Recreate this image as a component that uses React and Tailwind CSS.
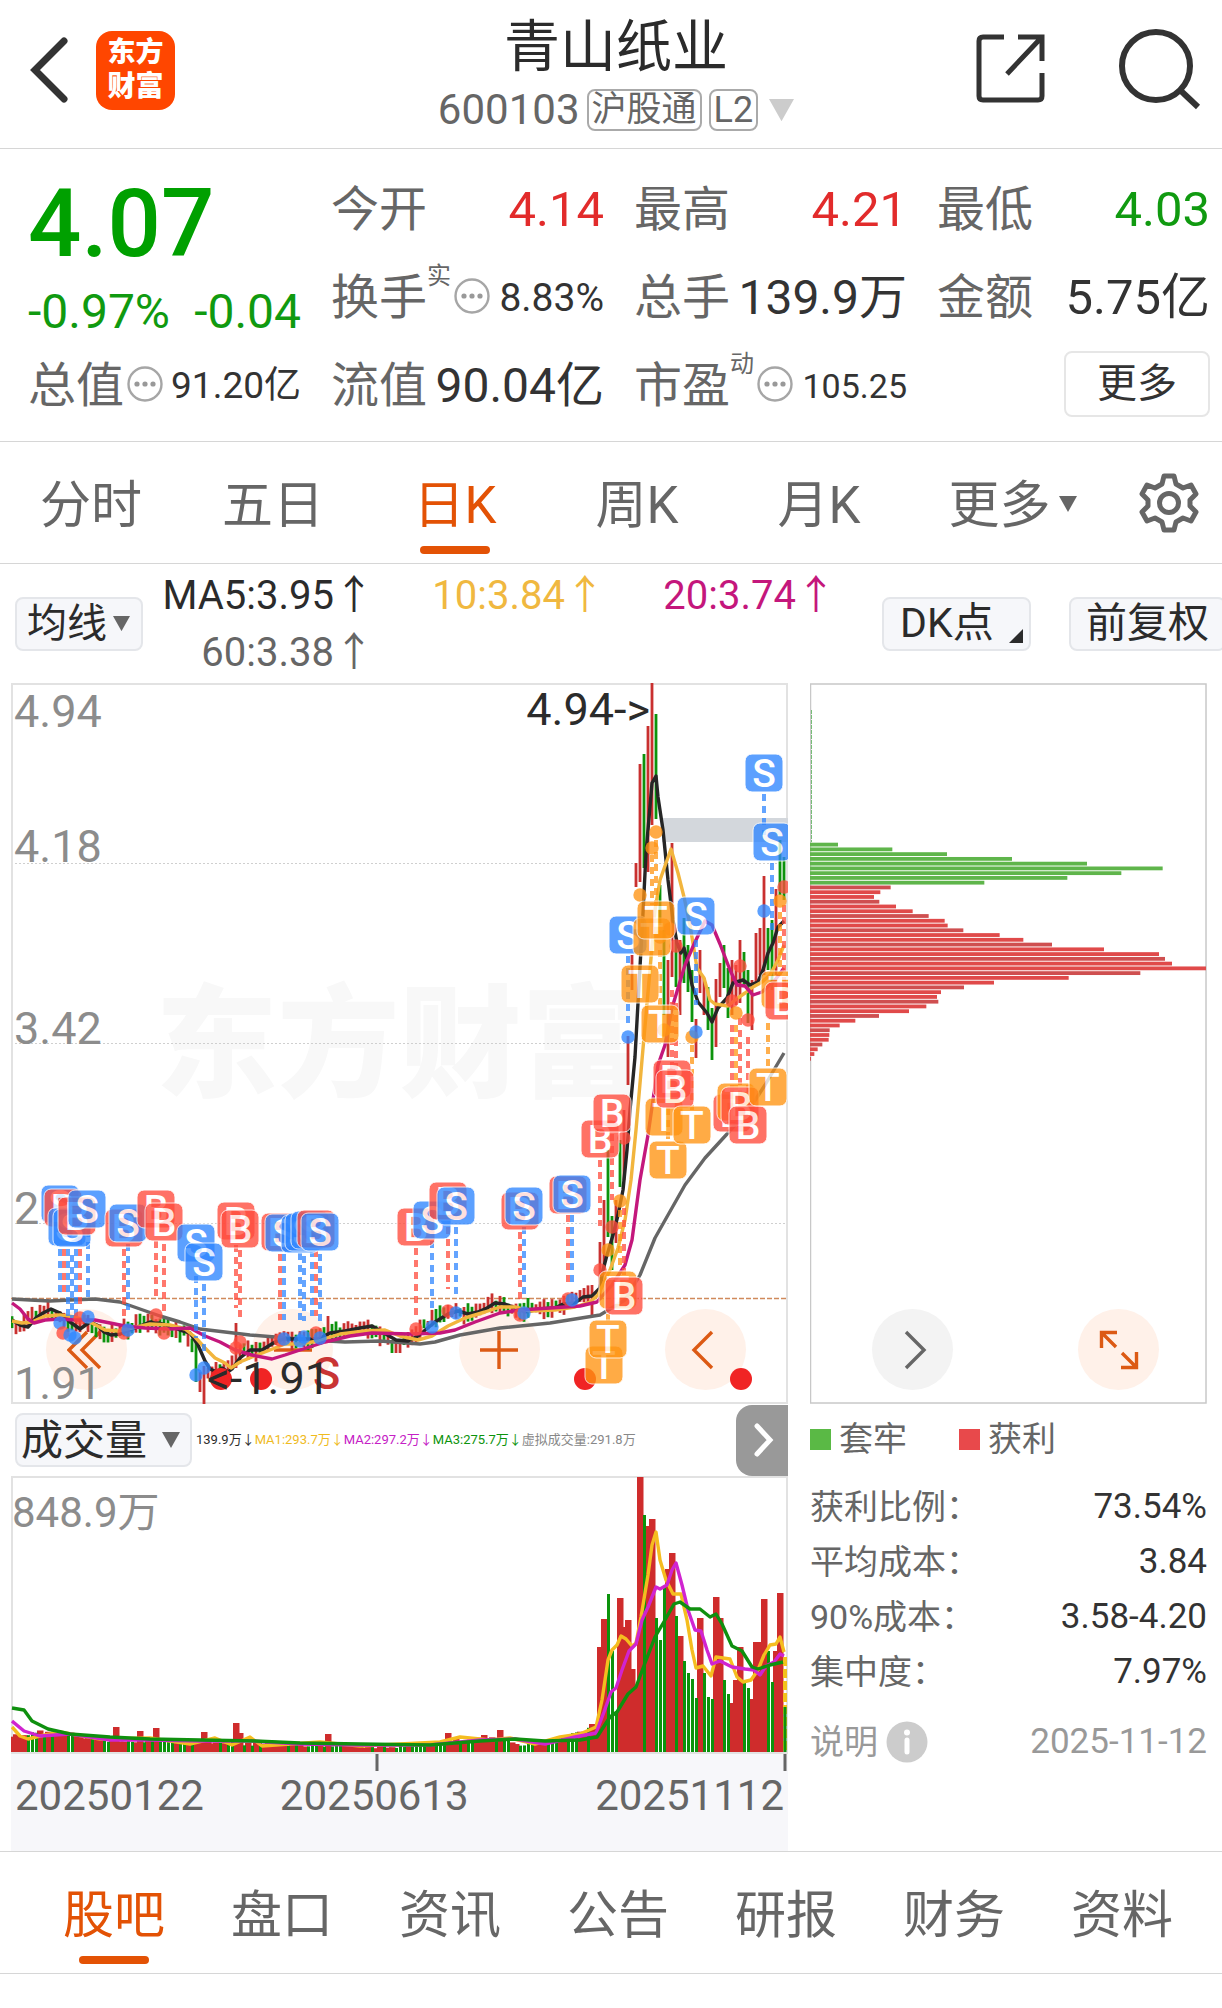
import React from "react";

const RED = "#c9302f";
const GREEN = "#0c930c";
const MARK = { S: "#2f86ff", B: "#ff4b3c", T: "#ff9412" };

function Triangle({ className }) {
  return (
    <svg viewBox="0 0 18 16" className={className} aria-hidden="true">
      <path d="M0 0H18L9 16Z" fill="currentColor" />
    </svg>
  );
}

function MoreDots() {
  return (
    <svg viewBox="0 0 36 36" className="mb-1 ml-[3px] size-9 shrink-0" aria-hidden="true">
      <circle cx="18" cy="18" r="16.5" fill="none" stroke="#a6a6a6" strokeWidth="2.4" />
      <circle cx="10" cy="18" r="2.6" fill="#999" />
      <circle cx="18" cy="18" r="2.6" fill="#999" />
      <circle cx="26" cy="18" r="2.6" fill="#999" />
    </svg>
  );
}

function Header() {
  return (
    <header className="grid grid-cols-[1fr_auto_1fr] items-center border-b border-[#d6d6d6] h-[149px] pl-[30px] pr-5">
      <div className="flex items-center gap-7 pb-2">
        <button aria-label="返回" className="w-[38px]">
          <svg viewBox="0 0 38 66" className="w-full">
            <path d="M34 4L5 33L34 62" fill="none" stroke="#333" strokeWidth="7" strokeLinecap="round" />
          </svg>
        </button>
        <div className="flex size-[79px] flex-col items-center justify-center rounded-2xl bg-[#ff4600] text-[28px] leading-[34px] font-black text-white">
          <span>东方</span>
          <span>财富</span>
        </div>
      </div>
      <div className="flex flex-col items-center gap-1">
        <h1 className="text-[56px] leading-[68px] text-[#2b2b2b]">青山纸业</h1>
        <div className="flex items-center gap-[7px] text-[#666]">
          <span className="text-[42px] leading-[50px]">600103</span>
          <span className="flex h-[42px] items-center rounded-lg border-2 border-[#aaa] px-[3px] text-[35px]">沪股通</span>
          <span className="flex h-[42px] items-center rounded-lg border-2 border-[#aaa] px-[3px] text-[36px]">L2</span>
          <Triangle className="ml-1 w-[25px] text-[#ccc]" />
        </div>
      </div>
      <div className="flex items-center justify-end gap-[72px] pb-3">
        <button aria-label="分享" className="size-[70px]">
          <svg viewBox="0 0 70 70" className="size-full" fill="none" stroke="#333" strokeWidth="5">
            <path d="M28 4H7Q3 4 3 8V63Q3 67 7 67H62Q66 67 66 63V40" />
            <path d="M42 4H66V28M65 5L31 41" />
          </svg>
        </button>
        <button aria-label="搜索" className="size-[84px]">
          <svg viewBox="0 0 84 84" className="size-full" fill="none" stroke="#333" strokeWidth="6">
            <circle cx="38" cy="40" r="34" />
            <path d="M62 64L80 81" />
          </svg>
        </button>
      </div>
    </header>
  );
}

function Stat({ label, note, dots, value, valueClass }) {
  return (
    <div className="flex h-[88px] items-center whitespace-nowrap">
      <dt className="flex items-center text-[48px] text-[#666]">
        {label}
        {note && <span className="-mt-11 text-[24px] leading-6">{note}</span>}
        {dots && <MoreDots />}
      </dt>
      <dd className={"ml-auto " + valueClass}>{value}</dd>
    </div>
  );
}

function Quote() {
  return (
    <dl className="grid grid-cols-4 gap-x-[30px] border-b border-[#d6d6d6] pt-[17px] pr-3 pb-[11px] pl-7">
      <div className="row-span-2 flex flex-col whitespace-nowrap text-[#109a10]">
        <div className="text-[94px] leading-[116px] font-medium text-[#00a000]">4.07</div>
        <div className="flex justify-between text-[48px] leading-[60px]">
          <span>-0.97%</span>
          <span>-0.04</span>
        </div>
      </div>
      <Stat label="今开" value="4.14" valueClass="text-[49px] text-[#e22b2b]" />
      <Stat label="最高" value="4.21" valueClass="text-[49px] text-[#e22b2b]" />
      <Stat label="最低" value="4.03" valueClass="text-[49px] text-[#109a10]" />
      <Stat label="换手" note="实" dots value="8.83%" valueClass="text-[39px] text-[#333]" />
      <Stat label="总手" value="139.9万" valueClass="text-[48px] text-[#333]" />
      <Stat label="金额" value="5.75亿" valueClass="text-[49px] text-[#333]" />
      <Stat label="总值" dots value="91.20亿" valueClass="text-[37px] text-[#333]" />
      <Stat label="流值" value="90.04亿" valueClass="text-[48px] text-[#333]" />
      <Stat label="市盈" note="动" dots value="105.25" valueClass="text-[34px] text-[#333]" />
      <div className="flex h-[88px] items-center justify-end">
        <button className="mb-1 h-[66px] w-[146px] rounded-lg border-2 border-[#e6e6e6] text-[40px] leading-[60px] text-[#333]">更多</button>
      </div>
    </dl>
  );
}

function PeriodTabs() {
  const tabs = ["分时", "五日", "日K", "周K", "月K"];
  return (
    <nav className="grid h-[122px] grid-cols-[repeat(5,182fr)_205fr_107fr] border-b border-[#d6d6d6] text-[51px] text-[#666]">
      {tabs.map((t) => (
        <button key={t} className={t === "日K" ? "flex flex-col items-center pt-[26px] text-[#e35205]" : "flex flex-col items-center pt-[26px]"}>
          <span className="leading-[76px]">{t}</span>
          {t === "日K" && <span className="mt-0.5 h-2 w-[70px] rounded-full bg-[#e35205]" />}
        </button>
      ))}
      <button className="flex items-start justify-center gap-2 pt-[26px]">
        <span className="leading-[76px]">更多</span>
        <Triangle className="mt-[28px] w-[18px]" />
      </button>
      <button aria-label="设置" className="flex justify-center pt-[31px]">
        <svg viewBox="0 0 60 60" className="size-[60px]" fill="none" stroke="#666" strokeWidth="5" strokeLinejoin="round">
          <path d="M25 3H35L37 11L44 15L52 12L57 21L51 27V33L57 39L52 48L44 45L37 49L35 57H25L23 49L16 45L8 48L3 39L9 33V27L3 21L8 12L16 15L23 11Z" />
          <circle cx="30" cy="30" r="9.5" />
        </svg>
      </button>
    </nav>
  );
}

const pill = "flex items-center rounded-lg border-2 border-[#e4e6ea] bg-[#f6f7fa] whitespace-nowrap text-[#2b2b2b] ";

function IndicatorBar() {
  return (
    <div className="flex h-[119px] items-center overflow-hidden pl-[15px]">
      <button className={pill + "h-[54px] w-[128px] shrink-0 gap-1.5 px-2.5 text-[40px]"}>
        均线
        <Triangle className="w-[17px] shrink-0 text-[#666]" />
      </button>
      <div className="grid flex-1 grid-cols-3 text-right text-[40px] leading-[57px] whitespace-nowrap">
        <span className="text-[#2b2b2b]">MA5:3.95↑</span>
        <span className="text-[#f0b840]">10:3.84↑</span>
        <span className="text-[#c4177c]">20:3.74↑</span>
        <span className="text-[#666]">60:3.38↑</span>
      </div>
      <button className={pill + "relative ml-[46px] h-[54px] w-[149px] shrink-0 pl-4 text-[41px]"}>
        DK点
        <svg viewBox="0 0 14 14" className="absolute right-1.5 bottom-1.5 size-3.5" aria-hidden="true">
          <path d="M14 0V14H0Z" fill="#2b2b2b" />
        </svg>
      </button>
      <button className={pill + "-mr-1 ml-[38px] h-[54px] shrink-0 px-[15px] text-[41px]"}>前复权</button>
    </div>
  );
}

const ma5 = [[12,1320],[20,1325],[28,1327],[36,1318],[43,1313],[51,1309],[60,1313],[70,1322],[80,1329],[90,1322],[97,1325],[104,1332],[111,1335],[120,1334],[130,1330],[140,1326],[150,1322],[158,1323],[170,1326],[180,1330],[190,1333],[198,1345],[205,1361],[210,1369],[217,1372],[222,1368],[228,1372],[232,1369],[240,1358],[250,1350],[262,1350],[275,1342],[284,1339],[300,1339],[318,1339],[330,1333],[345,1331],[360,1328],[372,1326],[384,1333],[396,1340],[408,1341],[418,1336],[435,1322],[448,1314],[458,1311],[468,1314],[478,1312],[487,1308],[495,1303],[505,1304],[515,1308],[525,1312],[540,1309],[555,1308],[563,1304],[575,1303],[583,1297],[592,1296],[600,1288],[603,1270],[607,1255],[613,1235],[618,1215],[623,1190],[627,1150],[630,1110],[635,1057],[643,913],[646,853],[652,783],[656,776],[658,797],[663,830],[668,880],[673,920],[677,943],[681,953],[684,948],[688,963],[692,985],[698,1002],[707,1013],[712,1022],[718,1008],[727,998],[733,983],[743,980],[750,985],[758,982],[763,970],[768,953],[773,943],[778,927],[784,921]];
const ma10 = [[12,1321],[22,1323],[32,1322],[45,1316],[60,1315],[75,1317],[90,1322],[105,1330],[118,1331],[132,1328],[150,1324],[170,1325],[185,1329],[195,1337],[205,1348],[215,1358],[225,1363],[231,1368],[240,1362],[252,1357],[270,1350],[285,1344],[300,1344],[318,1341],[340,1334],[365,1331],[385,1330],[400,1336],[418,1340],[432,1336],[448,1326],[465,1318],[485,1312],[500,1307],[515,1307],[530,1311],[555,1310],[575,1307],[590,1302],[598,1295],[610,1270],[618,1248],[625,1220],[631,1180],[636,1130],[642,1060],[650,970],[655,910],[660,880],[671,849],[678,873],[684,897],[690,925],[697,968],[704,978],[710,1000],[715,1004],[728,1006],[735,1000],[745,993],[753,987],[762,982],[770,975],[778,960],[784,945]];
const ma20 = [[12,1303],[20,1309],[28,1319],[34,1323],[45,1320],[60,1319],[75,1320],[95,1320],[110,1323],[125,1326],[145,1328],[170,1329],[190,1328],[205,1336],[220,1342],[235,1350],[252,1355],[272,1359],[285,1355],[300,1350],[325,1342],[350,1336],[372,1333],[410,1334],[440,1333],[455,1330],[475,1322],[500,1313],[520,1310],[550,1308],[580,1306],[597,1302],[612,1285],[625,1265],[632,1240],[640,1180],[648,1135],[658,1065],[665,1045],[672,1008],[685,965],[695,942],[705,921],[712,925],[720,944],[730,970],[737,985],[745,986],[753,995],[762,992],[775,980],[784,968]];
const ma60 = [[12,1299],[30,1300],[50,1301],[70,1300],[95,1299],[120,1302],[140,1309],[160,1316],[180,1322],[200,1329],[225,1332],[250,1335],[275,1337],[310,1340],[345,1342],[380,1341],[420,1344],[435,1342],[460,1335],[500,1328],[550,1323],[600,1315],[625,1300],[640,1275],[655,1238],[668,1215],[685,1185],[705,1158],[727,1134],[750,1108],[765,1085],[784,1053]];

const rally = [
  [592,1285,1315,"r"],[600,1242,1300,"r"],[604,1200,1270,"r"],[608,1150,1237,"g"],[612,1216,1270,"g"],[616,1200,1243,"r"],[620,1140,1187,"g"],[624,1110,1180,"r"],[628,1036,1085,"r"],[632,955,990,"r"],[636,863,887,"r"],[640,764,882,"r"],[644,754,868,"g"],[648,726,872,"r"],[652,683,825,"r"],[656,714,819,"g"],[660,885,925,"g"],[664,930,1015,"g"],[668,960,1057,"r"],[672,843,977,"r"],[676,940,987,"g"],[680,940,1015,"r"],[684,918,983,"g"],[688,945,992,"g"],[692,970,1022,"g"],[696,1019,1058,"r"],[700,950,993,"r"],[704,978,1015,"r"],[708,987,1030,"g"],[712,1008,1060,"g"],[716,979,1047,"r"],[720,963,997,"r"],[724,945,988,"g"],[728,968,1018,"g"],[732,960,1015,"r"],[736,965,1005,"r"],[740,940,1003,"r"],[744,952,986,"g"],[748,970,1023,"g"],[752,980,1030,"r"],[756,933,985,"r"],[760,928,975,"r"],[764,876,975,"r"],[768,928,970,"g"],[772,920,990,"g"],[776,889,975,"r"],[780,840,895,"g"],[784,857,900,"g"],
];
const spikes = { 196: [1340,1382,"g"], 200: [1372,1392,"r"], 204: [1366,1404,"r"], 236: [1323,1368,"r"], 328: [1316,1340,"r"], 392: [1340,1353,"g"], 396: [1342,1353,"r"], 400: [1341,1353,"r"] };

function lerp(points, x) {
  for (let i = 1; i < points.length; i++) {
    const [x0, y0] = points[i - 1];
    const [x1, y1] = points[i];
    if (x <= x1) return y0 + ((y1 - y0) * (x - x0)) / (x1 - x0);
  }
  return points[points.length - 1][1];
}
const noise = (n) => {
  const v = Math.sin(n * 12.9898) * 43758.5453;
  return v - Math.floor(v);
};

const candles = [];
for (let x = 12; x < 592; x += 4) {
  if (spikes[x]) {
    candles.push([x, ...spikes[x]]);
    continue;
  }
  const slope = lerp(ma5, x + 6) - lerp(ma5, x);
  const mid = lerp(ma5, x) + slope + (noise(x) - 0.5) * 5;
  const half = 4 + noise(x + 7) * 6;
  candles.push([x, mid - half, mid + half, noise(x + 3) + slope * 0.04 > 0.55 ? "g" : "r"]);
}
candles.push(...rally);

const path = (pts) => pts.map((p) => p.join(",")).join(" ");

const stems = [
  ["S",60,1249,1292],["B",64,1249,1297],["S",68,1249,1318],["S",72,1255,1318],["S",76,1249,1318],["B",80,1237,1305],["S",88,1230,1297],["B",124,1249,1316],["S",128,1244,1310],["B",156,1241,1297],["B",164,1244,1311],["S",196,1276,1338],["S",204,1284,1352],["B",236,1245,1308],["B",240,1250,1320],["B",280,1254,1320],["S",284,1254,1320],["S",300,1253,1323],["S",304,1256,1321],["S",312,1250,1316],["B",316,1250,1316],["S",320,1254,1321],["B",416,1248,1315],["S",432,1241,1308],["B",448,1227,1289],["S",456,1227,1294],["B",520,1232,1299],["S",524,1227,1294],["B",568,1215,1282],["S",572,1215,1282],["B",600,1160,1226],["B",612,1134,1200],["T",620,1210,1270],["B",624,1208,1280],["S",628,956,1023],["T",652,855,905],["T",656,840,905],["T",660,950,1010],["B",672,990,1070],["B",676,1003,1070],["T",692,1045,1110],["T",668,1108,1140],["S",696,940,1005],["S",764,794,835],["S",772,863,930],["B",732,1025,1095],["T",736,1025,1090],["B",740,1018,1095],["B",748,1037,1105],["T",768,1023,1070],["B",784,905,985],["T",780,912,975],["T",608,1314,1324],
];
const dots = [
  ["S",60,1323],["B",63,1333],["S",70,1335],["S",75,1338],["B",80,1318],["S",88,1317],["B",124,1333],["S",128,1330],["B",156,1315],["B",164,1333],["S",196,1375],["S",204,1368],["B",236,1348],["B",240,1342],["B",280,1340],["S",284,1339],["S",300,1341],["S",304,1337],["B",316,1333],["S",320,1338],["B",416,1329],["S",432,1327],["B",448,1311],["S",456,1313],["B",520,1315],["S",524,1313],["B",568,1299],["S",572,1300],["B",600,1270],["T",608,1250],["B",612,1227],["T",620,1201],["B",624,1138],["S",628,1037],["T",640,895],["T",652,848],["T",656,832],["B",670,929],["B",676,946],["T",660,937],["T",664,1030],["T",692,1037],["S",696,1032],["B",732,1001],["T",736,1013],["B",740,966],["B",748,1020],["S",764,911],["T",780,901],["B",784,887],
];
const tags = [
  ["S",60,1204],["B",63,1208],["S",67,1227],["S",72,1228],["B",77,1216],["S",87,1209],["B",124,1228],["S",128,1223],["B",156,1209],["B",164,1222],["S",196,1243],["S",204,1262],["B",236,1221],["B",240,1229],["B",280,1232],["S",284,1233],["S",300,1234],["S",304,1232],["S",310,1230],["B",316,1229],["S",320,1232],["B",416,1227],["S",432,1220],["B",448,1201],["S",456,1206],["B",520,1211],["S",524,1206],["B",568,1195],["S",572,1194],["B",600,1139],["B",612,1113],["T",618,1290],["B",624,1296],["T",604,1365],["T",608,1339],["S",628,935],["T",652,937],["T",656,920],["T",640,984],["T",660,1024],["S",696,916],["S",764,773],["S",772,842],["T",780,990],["B",784,1001],["T",664,1117],["B",672,1079],["B",675,1089],["T",668,1160],["T",692,1125],["B",732,1113],["T",736,1102],["B",740,1106],["B",748,1125],["T",768,1087],
];

function PriceChart() {
  return (
    <svg viewBox="11 683 777 721" className="pointer-events-none relative block w-full font-[Roboto,'Noto_Sans_CJK_SC',sans-serif]" role="img" aria-label="日K线图">
      <g stroke="#cfcfcf" strokeWidth="1" strokeDasharray="2 2">
        <path d="M11 863.5H788M11 1043.5H788M11 1223.5H788" />
      </g>
      <rect x="12" y="684" width="775" height="719" fill="none" stroke="#e2e2e2" strokeWidth="2" />
      <rect x="662" y="818" width="126" height="24" fill="#d3d7dc" />
      <g fontSize="45" fill="#8c8c8c">
        <text x="14" y="727">4.94</text>
        <text x="14" y="862">4.18</text>
        <text x="14" y="1044">3.42</text>
        <text x="14" y="1224">2</text>
        <text x="14" y="1399">1.91</text>
      </g>
      <path d="M11 1298.5H788" stroke="#d08a5c" strokeWidth="1.5" strokeDasharray="5 2" />
      {candles.map(([x, a, b, c]) => (
        <rect key={x} x={x - 1.4} y={a} width="2.8" height={b - a} fill={c === "r" ? RED : GREEN} />
      ))}
      <g fill="none" strokeWidth="3.4" strokeLinejoin="round">
        <polyline points={path(ma60)} stroke="#666" />
        <polyline points={path(ma5)} stroke="#262626" />
        <polyline points={path(ma10)} stroke="#f2b53d" />
        <polyline points={path(ma20)} stroke="#c4177c" />
      </g>
      <g fill="#f02424">
        <circle cx="221" cy="1379" r="11" />
        <circle cx="261" cy="1379" r="11" />
        <circle cx="585" cy="1379" r="11" />
        <circle cx="741" cy="1379" r="11" />
      </g>
      <text x="313" y="1389" fontSize="45" fontWeight="500" fill="#c93434">S</text>
      <g fontSize="45" fill="#2b2b2b">
        <text x="650" y="725" textAnchor="end">4.94-&gt;</text>
        <text x="207" y="1394">&lt;-1.91</text>
      </g>
      {stems.map(([t, x, a, b]) => (
        <path key={t + x + a} d={`M${x} ${a}V${b}`} stroke={MARK[t]} strokeOpacity="0.75" strokeWidth="4" strokeDasharray="7 5" />
      ))}
      {dots.map(([t, x, y]) => (
        <circle key={t + x + y} cx={x} cy={y} r="6.7" fill={MARK[t]} fillOpacity="0.78" />
      ))}
      {tags.map(([t, x, y]) => (
        <g key={t + x + y} opacity="0.78">
          <rect x={x - 19} y={y - 19} width="38" height="38" rx="7" fill={MARK[t]} stroke="#fff" strokeWidth="1" />
          <text x={x} y={y + 14} fontSize="39" fontWeight="500" fill="#fff" textAnchor="middle">{t}</text>
        </g>
      ))}
    </svg>
  );
}

const round = "flex size-[81px] items-center justify-center rounded-full ";

function ToolIcon({ d, color }) {
  return (
    <svg viewBox="0 0 40 40" className="size-10" fill="none" stroke={color} strokeWidth="3.4" aria-hidden="true">
      <path d={d} />
    </svg>
  );
}

function PricePanel() {
  const tools = [
    ["快速后退", "M20 2L2 20L20 38M33 2L15 20L33 38"],
    ["缩小", "M1 20H39"],
    ["放大", "M1 20H39M20 1V39"],
    ["后退", "M27 2L9 20L27 38"],
  ];
  return (
    <div className="relative">
      <div className="absolute inset-x-0 top-[288px] text-center text-[122px] leading-[150px] font-black text-[#f8f8f8]">东方财富</div>
      <div className="absolute inset-x-0 bottom-[14px] flex justify-between pr-[42px] pl-[35px]">
        {tools.map(([label, d]) => (
          <button key={label} aria-label={label} className={round + "bg-[#fff1e9]"}>
            <ToolIcon d={d} color="#dc5a14" />
          </button>
        ))}
      </div>
      <PriceChart />
    </div>
  );
}

const lossBars = [144,307,471,666,891,1118,994,832,583];
const gainBars = [302,271,252,268,318,368,416,464,473,520,629,700,786,942,1107,1125,1146,1248,1051,836,612,522,453,441,445,409,357,267,196,149,119,118,116,97,83,73,63];

function CostPanel() {
  return (
    <div className="relative">
      <svg viewBox="810 683 397 721" className="block w-full" role="img" aria-label="筹码分布">
        <path d="M811 710V842" stroke="#5cb85c" strokeWidth="2" strokeDasharray="4 1" />
        <rect x="810.5" y="684" width="395.5" height="719" fill="none" stroke="#c8c8c8" strokeWidth="1.5" />
        {[...lossBars, ...gainBars].map((v, i) => (
          <rect key={i} x="810" y={842.7 + i * 4.76} width={(v - 60) / 3} height="3.8" fill={i < lossBars.length ? "#5fb54b" : i % 3 ? "#e04a4a" : "#cf4f50"} />
        ))}
      </svg>
      <div className="absolute inset-x-0 bottom-[14px] flex justify-between pr-[48px] pl-[62px]">
        <button aria-label="前进" className={round + "bg-[#f3f3f3]"}>
          <ToolIcon d="M13 2L31 20L13 38" color="#666" />
        </button>
        <button aria-label="全屏" className={round + "bg-[#fff1e9]"}>
          <ToolIcon d="M18 2.5H2.5V18M3 3L17 17M22 37.5H37.5V22M37 37L23 23" color="#dc5a14" />
        </button>
      </div>
    </div>
  );
}

const recentVolume = [
  [600,1647,"r"],[604,1619,"r"],[608,1594,"g"],[612,1651,"g"],[616,1712,"g"],[620,1598,"r"],[624,1627,"r"],[628,1620,"r"],[632,1669,"r"],[636,1687,"r"],[640,1477,"r"],[644,1515,"g"],[648,1526,"r"],[652,1519,"r"],[656,1618,"g"],[660,1640,"g"],[664,1587,"g"],[668,1569,"r"],[672,1553,"r"],[676,1616,"g"],[680,1636,"r"],[684,1661,"g"],[688,1673,"g"],[692,1679,"g"],[696,1698,"g"],[700,1618,"r"],[704,1673,"g"],[708,1697,"g"],[712,1699,"g"],[716,1597,"r"],[720,1618,"r"],[724,1680,"g"],[728,1694,"g"],[732,1703,"r"],[736,1680,"r"],[740,1647,"r"],[744,1683,"g"],[748,1688,"g"],[752,1699,"r"],[756,1642,"r"],[760,1642,"r"],[764,1599,"r"],[768,1651,"g"],[772,1682,"g"],[776,1651,"r"],[780,1593,"r"],
];
const volumeLevel = [[12,1736],[40,1731],[70,1735],[110,1739],[200,1741],[260,1743],[330,1744],[400,1746],[440,1741],[490,1737],[520,1743],[560,1738],[590,1727]];
const volumePeaks = { 116: 1727, 140: 1731, 156: 1728, 204: 1732, 236: 1723, 240: 1733, 328: 1734, 448: 1733, 484: 1735, 500: 1730, 592: 1724 };
const volume = [];
for (let x = 12; x < 600; x += 4) {
  const top = volumePeaks[x] || lerp(volumeLevel, x) + noise(x + 11) * 4 - 1;
  volume.push([x, top, volumePeaks[x] && x !== 240 ? "r" : noise(x + 3) > 0.5 ? "g" : "r"]);
}
volume.push(...recentVolume);

const vol5 = [[12,1727],[20,1736],[28,1739],[40,1736],[60,1732],[100,1739],[150,1738],[190,1744],[215,1738],[232,1745],[250,1737],[262,1746],[290,1744],[320,1742],[360,1746],[400,1744],[440,1742],[460,1737],[490,1740],[510,1738],[535,1744],[560,1737],[580,1734],[596,1727],[602,1700],[608,1660],[612,1650],[617,1645],[621,1636],[626,1639],[632,1646],[636,1643],[641,1617],[648,1575],[652,1545],[656,1532],[660,1560],[666,1580],[673,1594],[681,1594],[687,1620],[692,1650],[696,1668],[703,1666],[711,1676],[716,1657],[730,1659],[737,1677],[743,1682],[751,1680],[758,1670],[764,1655],[770,1645],[776,1644],[780,1637],[784,1652]];
const vol10 = [[12,1721],[24,1731],[40,1736],[70,1734],[110,1740],[150,1740],[200,1741],[250,1741],[300,1744],[360,1745],[430,1745],[480,1740],[515,1739],[545,1744],[575,1737],[596,1733],[604,1712],[611,1692],[616,1688],[622,1670],[629,1651],[636,1644],[642,1620],[648,1607],[656,1587],[660,1589],[667,1585],[672,1570],[676,1563],[682,1585],[688,1610],[695,1630],[701,1631],[707,1650],[712,1664],[720,1661],[732,1667],[745,1669],[754,1670],[760,1675],[766,1666],[774,1662],[780,1654],[784,1656]];
const vol20 = [[12,1708],[24,1710],[32,1721],[48,1729],[70,1734],[110,1737],[150,1739],[200,1740],[255,1741],[300,1743],[360,1744],[430,1745],[480,1741],[515,1739],[545,1741],[580,1740],[597,1737],[610,1717],[617,1712],[628,1694],[636,1687],[645,1663],[655,1637],[665,1620],[674,1604],[680,1602],[690,1609],[700,1609],[710,1617],[716,1614],[722,1624],[732,1646],[742,1651],[752,1667],[758,1669],[770,1665],[783,1662]];

function VolumePanel() {
  return (
    <div>
      <div className="flex h-[72px] items-center pl-1">
        <button className={pill + "h-[54px] w-[177px] shrink-0 justify-between pr-2.5 pl-1 text-[42px]"}>
          成交量
          <Triangle className="w-[18px] shrink-0 text-[#666]" />
        </button>
        <div className="ml-1 flex flex-1 text-[13px] whitespace-nowrap">
          <span className="text-[#2b2b2b]">139.9万↓</span>
          <span className="text-[#efbb1e]">MA1:293.7万↓</span>
          <span className="text-[#c520c5]">MA2:297.2万↓</span>
          <span className="text-[#0c930c]">MA3:275.7万↓</span>
          <span className="text-[#888]">虚拟成交量:291.8万</span>
        </div>
        <button aria-label="展开" className="flex h-[71px] w-[52px] shrink-0 items-center justify-center rounded-l-2xl bg-[#999] pl-1">
          <svg viewBox="0 0 20 34" className="w-5" fill="none" stroke="#fff" strokeWidth="5" strokeLinecap="round">
            <path d="M3 3L16 17L3 31" />
          </svg>
        </button>
      </div>
      <svg viewBox="11 1476 777 278" className="block w-full font-[Roboto,'Noto_Sans_CJK_SC',sans-serif]" role="img" aria-label="成交量图">
        <rect x="12" y="1477" width="775" height="276" fill="none" stroke="#e2e2e2" strokeWidth="2" />
        <text x="12" y="1527" fontSize="42" fill="#8c8c8c">848.9万</text>
        {volume.filter((v) => v[2] === "r").map(([x, top]) => (
          <rect key={x} x={x - 3} y={top} width="6.5" height={1752 - top} fill="#cf2c2c" />
        ))}
        {volume.filter((v) => v[2] === "g").map(([x, top]) => (
          <rect key={x} x={x - 1} y={top} width="3" height={1752 - top} fill={GREEN} />
        ))}
        <path d="M785 1657V1752" stroke="#f2c21c" strokeWidth="4" strokeDasharray="9 3" />
        <path d="M785 1707V1752" stroke={GREEN} strokeWidth="3" />
        <g fill="none" strokeWidth="3.4" strokeLinejoin="round">
          <polyline points={path(vol5)} stroke="#f5bd1f" />
          <polyline points={path(vol10)} stroke="#d024d0" />
          <polyline points={path(vol20)} stroke="#0f900f" />
        </g>
      </svg>
      <div className="h-[97px] bg-[#f7f7fa] text-[42px] text-[#666]">
        <svg viewBox="0 0 777 17" className="block w-full" aria-hidden="true">
          <path d="M366 0V17M774 0V17" stroke="#666" strokeWidth="3" />
        </svg>
        <div className="flex px-1 leading-[50px]">
          <span>20250122</span>
          <span className="ml-[76px]">20250613</span>
          <span className="ml-auto">20251112</span>
        </div>
      </div>
    </div>
  );
}

function CostStats() {
  const rows = [
    ["获利比例：", "73.54%"],
    ["平均成本：", "3.84"],
    ["90%成本：", "3.58-4.20"],
    ["集中度：", "7.97%"],
  ];
  return (
    <div className="text-[34px] whitespace-nowrap text-[#666]">
      <div className="flex h-[70px] items-center">
        <span className="mr-2 size-[21px] bg-[#5ab945]" />套牢
        <span className="mr-2 ml-[52px] size-[21px] bg-[#e8494b]" />获利
      </div>
      <dl className="pt-1.5">
        {rows.map(([k, v]) => (
          <div key={k} className="flex h-[55px] items-center justify-between">
            <dt>{k}</dt>
            <dd className="text-[35px] text-[#333]">{v}</dd>
          </div>
        ))}
      </dl>
      <div className="mt-2.5 flex h-16 items-center text-[#999]">
        说明
        <svg viewBox="0 0 42 42" className="ml-2 size-[42px]" aria-hidden="true">
          <circle cx="21" cy="21" r="20.5" fill="#ccc" />
          <path d="M21 19V31" stroke="#fff" strokeWidth="5" strokeLinecap="round" />
          <circle cx="21" cy="11.5" r="3" fill="#fff" />
        </svg>
        <span className="ml-auto text-[35px]">2025-11-12</span>
      </div>
    </div>
  );
}

function BottomTabs() {
  const tabs = ["股吧", "盘口", "资讯", "公告", "研报", "财务", "资料"];
  return (
    <nav className="grid h-[123px] grid-cols-7 border-y border-[#d6d6d6] pr-4 pl-[30px] text-[51px] text-[#666]">
      {tabs.map((t, i) => (
        <a key={t} href="#" className={i === 0 ? "flex flex-col items-center pt-[26px] text-[#e35205]" : "flex flex-col items-center pt-[26px]"}>
          <span className="leading-[76px]">{t}</span>
          {i === 0 && <span className="mt-0.5 h-2 w-[70px] rounded-full bg-[#e35205]" />}
        </a>
      ))}
    </nav>
  );
}

export default function App() {
  return (
    <main className="min-h-screen bg-white font-[Roboto,'Noto_Sans_CJK_SC',sans-serif]">
      <Header />
      <Quote />
      <PeriodTabs />
      <IndicatorBar />
      <div className="grid grid-cols-[777fr_397fr] gap-x-[22px] pr-[15px] pl-[11px]">
        <PricePanel />
        <CostPanel />
        <VolumePanel />
        <CostStats />
      </div>
      <BottomTabs />
    </main>
  );
}
